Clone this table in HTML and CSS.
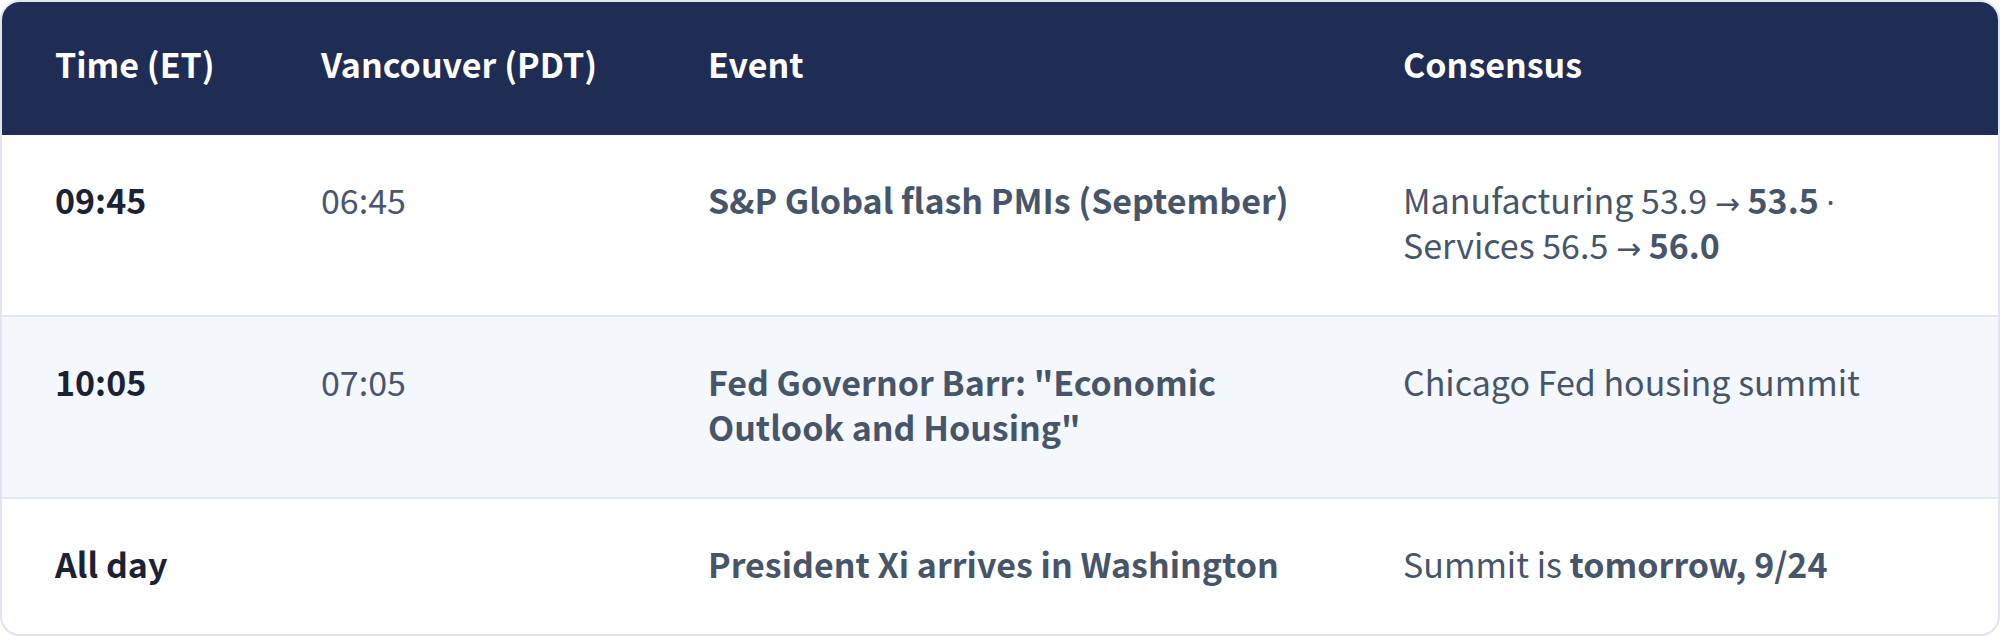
FILE: index.html
```html
<!DOCTYPE html>
<html lang="en">
<head>
<meta charset="utf-8">
<title>Schedule</title>
<link rel="stylesheet" href="styles.css">
</head>
<body>
<div class="card">
  <div class="row head">
    <div class="cell">Time (ET)</div>
    <div class="cell">Vancouver (PDT)</div>
    <div class="cell">Event</div>
    <div class="cell cons">Consensus</div>
  </div>
  <div class="row">
    <div class="cell time">09:45</div>
    <div class="cell local">06:45</div>
    <div class="cell event">S&amp;P Global flash PMIs (September)</div>
    <div class="cell cons">Manufacturing 53.9 <span class="sym">→</span> <b>53.5</b> <span class="sym">·</span> Services 56.5 <span class="sym">→</span> <b>56.0</b></div>
  </div>
  <div class="row alt">
    <div class="cell time">10:05</div>
    <div class="cell local">07:05</div>
    <div class="cell event">Fed Governor Barr: "Economic Outlook and Housing"</div>
    <div class="cell cons">Chicago Fed housing summit</div>
  </div>
  <div class="row last">
    <div class="cell time">All day</div>
    <div class="cell local"></div>
    <div class="cell event">President Xi arrives in Washington</div>
    <div class="cell cons">Summit is <b>tomorrow, 9/24</b></div>
  </div>
</div>
</body>
</html>
```
FILE: styles.css
```css
* { box-sizing: border-box; }
html, body { margin: 0; padding: 0; background: #ffffff; }
body {
  font-family: "Noto Sans CJK KR", "Noto Sans", sans-serif;
  width: 2000px;
  height: 636px;
}
.card {
  width: 2000px;
  height: 636px;
  border: 2px solid #dfe5ef;
  border-radius: 20px;
  overflow: hidden;
  background: #ffffff;
}
.row {
  display: grid;
  grid-template-columns: 266px 387px 695px 1fr;
  border-bottom: 2px solid #e1e6ef;
}
.row.last { border-bottom: none; }
.row.alt { background: #f4f7fc; }
.cell {
  padding: 42px 40px 48px 53px;
  font-size: 34px;
  line-height: 45px;
  color: #475569;
}
.cell.cons { padding-right: 100px; }
.head {
  background: #1f2c54;
  border-bottom: none;
  height: 133px;
}
.head .cell {
  color: #ffffff;
  font-weight: 700;
  padding-top: 39px;
}
.time { color: #1a2233; font-weight: 700; }
.local { color: #4a5670; }
.event { font-weight: 700; color: #475569; }
.cons b { font-weight: 700; }
.sym { font-family: "Noto Sans", "DejaVu Sans", sans-serif; font-size: 30px; line-height: 0; }
```
